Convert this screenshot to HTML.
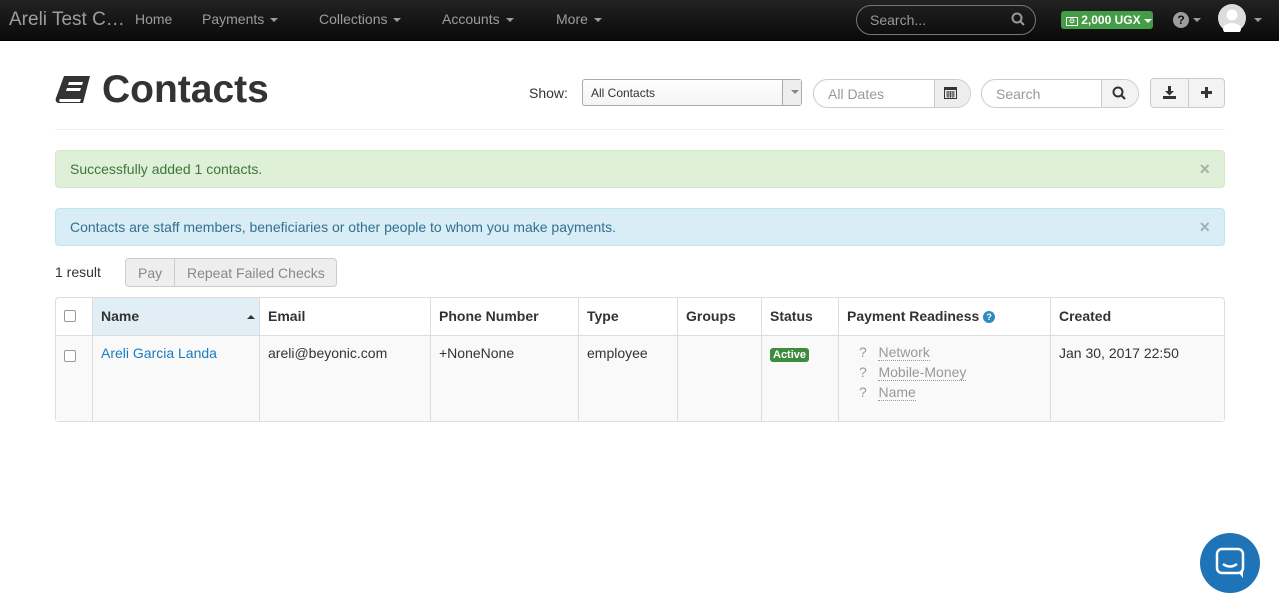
<!DOCTYPE html>
<html><head><meta charset="utf-8"><style>
*{box-sizing:border-box;margin:0;padding:0}
body{width:1279px;height:614px;overflow:hidden;background:#fff;font-family:"Liberation Sans",sans-serif;font-size:14px;color:#333;position:relative}
.nav{position:absolute;left:0;top:0;width:1279px;height:41px;background:linear-gradient(#222,#0a0a0a);border-bottom:1px solid #000}
.nav span{position:absolute;color:#9d9d9d;font-size:14px;top:11px}
.caret{display:inline-block;width:0;height:0;border-left:4px solid transparent;border-right:4px solid transparent;border-top:4px solid currentColor;vertical-align:middle;margin-left:6px}
.abs{position:absolute}
.alert{position:absolute;left:55px;width:1170px;height:38px;border:1px solid;border-radius:4px;padding:10px 14px;font-size:14px}
.alert .x{position:absolute;right:14px;top:8px;font-size:18px;font-weight:bold;opacity:.25;color:#000}
table{position:absolute;left:55px;top:297px;width:1170px;border-collapse:separate;border-spacing:0;border:1px solid #ddd;border-radius:4px}
th,td{border-left:1px solid #ddd;padding:0 8px;text-align:left;vertical-align:top}
th:first-child,td:first-child{border-left:none}
th{height:37px;line-height:36px;font-weight:bold;border-bottom:1px solid #ddd}
td{height:85px;padding-top:9px;background:#f9f9f9}
.cb{display:inline-block;width:12px;height:12px;border:1px solid #999;border-radius:2px;background:#fff;margin-top:5px}
.pr div{color:#999;line-height:20px}
.pr u{text-decoration:none;border-bottom:1px dotted #999}
.btn{position:absolute;border:1px solid #ccc;background:#f3f3f3;height:29px;border-radius:4px}
</style></head><body>
<div class="nav">
<span style="left:9px;top:9px;font-size:19px;color:#9d9d9d">Areli Test C…</span>
<span style="left:135px">Home</span>
<span style="left:202px">Payments<i class="caret"></i></span>
<span style="left:319px">Collections<i class="caret"></i></span>
<span style="left:442px">Accounts<i class="caret"></i></span>
<span style="left:556px">More<i class="caret"></i></span>
<div class="abs" style="left:856px;top:5px;width:180px;height:30px;border:1px solid #777;border-radius:15px"></div>
<span style="left:870px;top:12px;color:#999">Search...</span>
<svg class="abs" style="left:1011px;top:12px" width="14" height="14"><circle cx="6" cy="6" r="4.5" stroke="#999" stroke-width="2" fill="none"/><line x1="9" y1="9" x2="13" y2="13" stroke="#999" stroke-width="2"/></svg>
<div class="abs" style="left:1061px;top:11px;width:92px;height:18px;background:#449d44;border-radius:3px;color:#fff;font-size:12px;font-weight:bold;line-height:18px;padding-left:5px"><span style="position:static;color:#fff;border:1px solid #fff;font-size:7px;padding:0 2px;vertical-align:1px">⊙</span> 2,000 UGX<i class="caret" style="margin-left:3px"></i></div>
<div class="abs" style="left:1173px;top:12px;width:16px;height:16px;border-radius:50%;background:#9d9d9d;color:#111;font-size:12px;font-weight:bold;text-align:center;line-height:16px">?</div>
<span style="left:1189px;top:11px"><i class="caret" style="margin-left:4px"></i></span>
<svg class="abs" style="left:1218px;top:4px" width="28" height="28"><circle cx="14" cy="14" r="14" fill="#ddd"/><circle cx="14" cy="11" r="5.5" fill="#fff"/><ellipse cx="14" cy="25" rx="9" ry="6" fill="#fff"/></svg>
<span style="left:1248px;top:11px"><i class="caret"></i></span>
</div>

<svg class="abs" style="left:55px;top:75px" width="36" height="32" viewBox="0 0 36 32"><path d="M9 1h26l-7 27H4c-3 0-4-3-3-5z" fill="#333"/><path d="M5 24h21l-1 3H5c-1 0-1-3 0-3z" fill="#fff"/><path d="M14 7h14l-1 3H13zM12 13h14l-1 3H11z" fill="#fff"/></svg>
<div class="abs" style="left:102px;top:68px;font-size:39px;font-weight:bold;color:#333">Contacts</div>

<div class="abs" style="left:529px;top:85px;font-size:14px">Show:</div>
<div class="abs" style="left:582px;top:79px;width:220px;height:27px;border:1px solid #aaa;border-radius:3px;background:linear-gradient(#fff,#f4f4f4);font-size:12px;padding:6px 8px">All Contacts</div>
<div class="abs" style="left:782px;top:80px;width:19px;height:25px;border-left:1px solid #aaa;background:#eee"><i class="caret" style="position:absolute;left:2px;top:10px;color:#888"></i></div>
<div class="abs" style="left:813px;top:79px;width:158px;height:29px;border:1px solid #ccc;border-radius:15px;overflow:hidden"><div style="position:absolute;left:120px;top:0;width:40px;height:29px;background:#eee;border-left:1px solid #ccc"></div></div>
<div class="abs" style="left:828px;top:86px;color:#999">All Dates</div>
<svg class="abs" style="left:944px;top:86px" width="13" height="13"><rect x="0.5" y="1.5" width="12" height="11" fill="none" stroke="#333"/><rect x="0" y="1" width="13" height="3" fill="#333"/><path d="M2 6h9M2 8h9M2 10h9M4 5v7M6.5 5v7M9 5v7" stroke="#333" stroke-width=".8"/></svg>
<div class="abs" style="left:981px;top:79px;width:158px;height:29px;border:1px solid #ccc;border-radius:15px;overflow:hidden"><div style="position:absolute;left:119px;top:0;width:40px;height:29px;background:#f3f3f3;border-left:1px solid #ccc"></div></div>
<div class="abs" style="left:996px;top:86px;color:#999">Search</div>
<svg class="abs" style="left:1112px;top:86px" width="14" height="14"><circle cx="6" cy="6" r="4.5" stroke="#333" stroke-width="2" fill="none"/><line x1="9" y1="9" x2="13" y2="13" stroke="#333" stroke-width="2.2"/></svg>
<div class="btn" style="left:1150px;top:78px;width:75px;height:30px"><div style="position:absolute;left:37px;top:0;height:28px;border-left:1px solid #ccc"></div></div>
<svg class="abs" style="left:1163px;top:86px" width="13" height="13"><path d="M5 0h3v5h3l-4.5 4.5L2 5h3z" fill="#333"/><rect x="0" y="10" width="13" height="3" fill="#333"/></svg>
<svg class="abs" style="left:1201px;top:87px" width="11" height="11"><path d="M4 0h3v4h4v3H7v4H4V7H0V4h4z" fill="#333"/></svg>

<div class="abs" style="left:55px;top:129px;width:1170px;border-top:1px solid #eee"></div>

<div class="alert" style="top:150px;background:#dff0d8;border-color:#d6e9c6;color:#3c763d">Successfully added 1 contacts.<span class="x">×</span></div>
<div class="alert" style="top:208px;background:#d9edf7;border-color:#bce8f1;color:#31708f">Contacts are staff members, beneficiaries or other people to whom you make payments.<span class="x">×</span></div>

<div class="abs" style="left:55px;top:264px">1 result</div>
<div class="btn" style="left:125px;top:258px;width:212px;color:#888;background:#eee"><span style="position:absolute;left:12px;top:6px">Pay</span><div style="position:absolute;left:48px;top:0;height:27px;border-left:1px solid #ccc"></div><span style="position:absolute;left:61px;top:6px">Repeat Failed Checks</span></div>

<table>
<tr><th style="width:36px"><span class="cb" style="margin-top:12px"></span></th><th style="width:167px;background:#e1eef5;position:relative">Name<i class="caret" style="position:absolute;right:4px;top:17px;border-top:none;border-bottom:4px solid #333"></i></th><th style="width:171px">Email</th><th style="width:148px">Phone Number</th><th style="width:99px">Type</th><th style="width:84px">Groups</th><th style="width:77px">Status</th><th style="width:212px">Payment Readiness <span style="display:inline-block;width:12px;height:12px;border-radius:50%;background:#2e8bc0;color:#fff;font-size:9px;text-align:center;line-height:12px;vertical-align:1px">?</span></th><th>Created</th></tr>
<tr><td><span class="cb"></span></td><td style="color:#1a7bc0">Areli Garcia Landa</td><td>areli@beyonic.com</td><td>+NoneNone</td><td>employee</td><td></td><td><span style="display:inline-block;background:#3d8b3d;color:#fff;font-size:11px;font-weight:bold;padding:1px 3px;border-radius:3px">Active</span></td><td class="pr" style="padding-left:20px;padding-top:6px"><div>?&nbsp;&nbsp; <u>Network</u></div><div>?&nbsp;&nbsp; <u>Mobile-Money</u></div><div>?&nbsp;&nbsp; <u>Name</u></div></td><td>Jan 30, 2017 22:50</td></tr>
</table>

<div class="abs" style="left:1200px;top:533px;width:60px;height:60px;border-radius:50%;background:#1f73b7"></div>
<svg class="abs" style="left:1215px;top:547px" width="30" height="32"><rect x="2" y="2" width="26" height="24" rx="5" fill="none" stroke="#fff" stroke-width="2.5"/><path d="M24 26l4 5v-6" fill="#fff"/><path d="M8 17q7 5 14 0" stroke="#fff" stroke-width="2.5" fill="none"/></svg>
</body></html>
